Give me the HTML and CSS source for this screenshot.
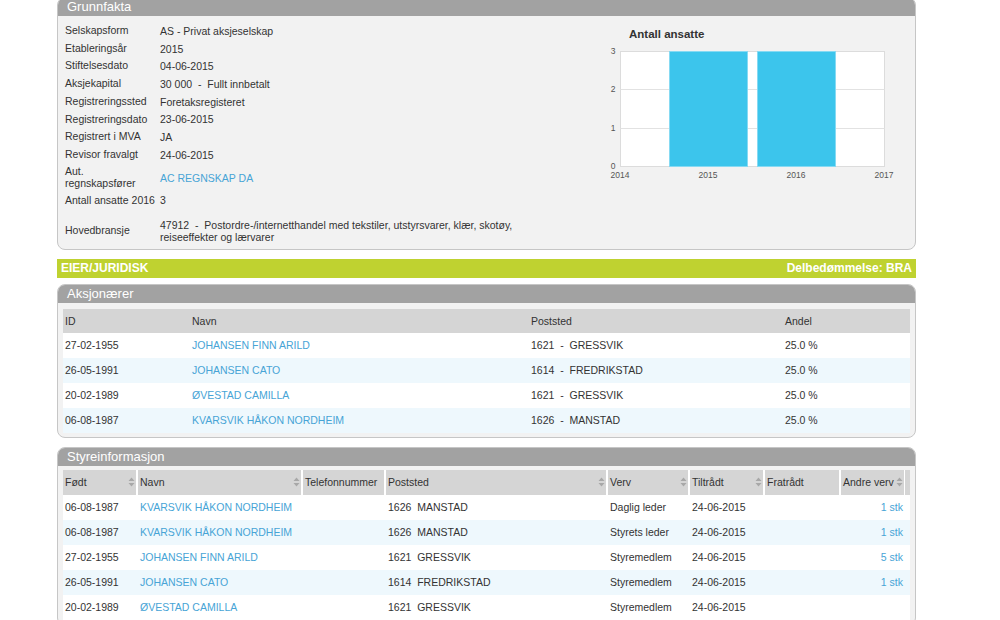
FILE: index.html
```html
<!DOCTYPE html>
<html lang="no">
<head>
<meta charset="utf-8">
<title>Grunnfakta</title>
<link rel="stylesheet" href="styles.css">
</head>
<body>
<div class="page">
  <section class="panel panel-first">
    <div class="panel-head">Grunnfakta</div>
    <div class="facts-body">
      <div class="facts">
        <div class="fact"><div class="fact-label">Selskapsform</div><div class="fact-value">AS - Privat aksjeselskap</div></div>
        <div class="fact"><div class="fact-label">Etableringsår</div><div class="fact-value">2015</div></div>
        <div class="fact"><div class="fact-label">Stiftelsesdato</div><div class="fact-value">04-06-2015</div></div>
        <div class="fact"><div class="fact-label">Aksjekapital</div><div class="fact-value">30 000&nbsp; -&nbsp; Fullt innbetalt</div></div>
        <div class="fact"><div class="fact-label">Registreringssted</div><div class="fact-value">Foretaksregisteret</div></div>
        <div class="fact"><div class="fact-label">Registreringsdato</div><div class="fact-value">23-06-2015</div></div>
        <div class="fact"><div class="fact-label">Registrert i MVA</div><div class="fact-value">JA</div></div>
        <div class="fact"><div class="fact-label">Revisor fravalgt</div><div class="fact-value">24-06-2015</div></div>
        <div class="fact fact-tall"><div class="fact-label">Aut.<br>regnskapsfører</div><div class="fact-value"><a class="link" href="#">AC REGNSKAP DA</a></div></div>
        <div class="fact"><div class="fact-label">Antall ansatte 2016</div><div class="fact-value">3</div></div>
        <div class="fact fact-branch"><div class="fact-label">Hovedbransje</div><div class="fact-value">47912&nbsp; -&nbsp; Postordre-/internetthandel med tekstiler, utstyrsvarer, klær, skotøy,<br>reiseeffekter og lærvarer</div></div>
      </div>
      <div class="chart">
        <svg width="290" height="156" viewBox="0 0 290 156">
          <text class="chart-title" x="24" y="12">Antall ansatte</text>
          <rect x="15.5" y="25.5" width="264" height="115" fill="#fff" stroke="#dcdcdc"/>
          <line x1="15.5" y1="63.5" x2="279.5" y2="63.5" stroke="#e2e2e2"/>
          <line x1="15.5" y1="102.5" x2="279.5" y2="102.5" stroke="#e2e2e2"/>
          <rect x="64.5" y="25.5" width="78" height="115" fill="#3cc5ec" stroke="#86daf3"/>
          <rect x="152.5" y="25.5" width="78" height="115" fill="#3cc5ec" stroke="#86daf3"/>
          <text class="axis" x="8" y="28" text-anchor="middle">3</text>
          <text class="axis" x="8" y="66" text-anchor="middle">2</text>
          <text class="axis" x="8" y="105" text-anchor="middle">1</text>
          <text class="axis" x="8" y="143" text-anchor="middle">0</text>
          <text class="axis" x="15" y="152" text-anchor="middle">2014</text>
          <text class="axis" x="103" y="152" text-anchor="middle">2015</text>
          <text class="axis" x="191" y="152" text-anchor="middle">2016</text>
          <text class="axis" x="279" y="152" text-anchor="middle">2017</text>
        </svg>
      </div>
    </div>
  </section>

  <div class="section-bar"><span>EIER/JURIDISK</span><span>Delbedømmelse: BRA</span></div>

  <section class="panel panel-owners">
    <div class="panel-head">Aksjonærer</div>
    <table class="grid owners">
      <thead>
        <tr><th class="c-id">ID</th><th class="c-name">Navn</th><th class="c-post">Poststed</th><th class="c-share">Andel</th></tr>
      </thead>
      <tbody>
        <tr><td>27-02-1955</td><td><a class="link" href="#">JOHANSEN FINN ARILD</a></td><td>1621&nbsp; -&nbsp; GRESSVIK</td><td>25.0 %</td></tr>
        <tr><td>26-05-1991</td><td><a class="link" href="#">JOHANSEN CATO</a></td><td>1614&nbsp; -&nbsp; FREDRIKSTAD</td><td>25.0 %</td></tr>
        <tr><td>20-02-1989</td><td><a class="link" href="#">ØVESTAD CAMILLA</a></td><td>1621&nbsp; -&nbsp; GRESSVIK</td><td>25.0 %</td></tr>
        <tr><td>06-08-1987</td><td><a class="link" href="#">KVARSVIK HÅKON NORDHEIM</a></td><td>1626&nbsp; -&nbsp; MANSTAD</td><td>25.0 %</td></tr>
      </tbody>
    </table>
  </section>

  <section class="panel panel-board">
    <div class="panel-head">Styreinformasjon</div>
    <table class="grid board">
      <thead>
        <tr>
          <th class="b-born"><div class="th-in"><span>Født</span><svg class="sort" width="7" height="10" viewBox="0 0 7 10"><path d="M0.5 4 L3.5 0.5 L6.5 4 Z M0.5 6 L3.5 9.5 L6.5 6 Z"/></svg></div></th>
          <th class="b-name"><div class="th-in"><span>Navn</span><svg class="sort" width="7" height="10" viewBox="0 0 7 10"><path d="M0.5 4 L3.5 0.5 L6.5 4 Z M0.5 6 L3.5 9.5 L6.5 6 Z"/></svg></div></th>
          <th class="b-phone"><div class="th-in"><span>Telefonnummer</span></div></th>
          <th class="b-post"><div class="th-in"><span>Poststed</span><svg class="sort" width="7" height="10" viewBox="0 0 7 10"><path d="M0.5 4 L3.5 0.5 L6.5 4 Z M0.5 6 L3.5 9.5 L6.5 6 Z"/></svg></div></th>
          <th class="b-role"><div class="th-in"><span>Verv</span><svg class="sort" width="7" height="10" viewBox="0 0 7 10"><path d="M0.5 4 L3.5 0.5 L6.5 4 Z M0.5 6 L3.5 9.5 L6.5 6 Z"/></svg></div></th>
          <th class="b-from"><div class="th-in"><span>Tiltrådt</span><svg class="sort" width="7" height="10" viewBox="0 0 7 10"><path d="M0.5 4 L3.5 0.5 L6.5 4 Z M0.5 6 L3.5 9.5 L6.5 6 Z"/></svg></div></th>
          <th class="b-to"><div class="th-in"><span>Fratrådt</span></div></th>
          <th class="b-other"><div class="th-in"><span>Andre verv</span><svg class="sort" width="7" height="10" viewBox="0 0 7 10"><path d="M0.5 4 L3.5 0.5 L6.5 4 Z M0.5 6 L3.5 9.5 L6.5 6 Z"/></svg></div></th>
          <th class="b-scroll"></th>
        </tr>
      </thead>
      <tbody>
        <tr><td>06-08-1987</td><td><a class="link" href="#">KVARSVIK HÅKON NORDHEIM</a></td><td></td><td>1626&nbsp; MANSTAD</td><td>Daglig leder</td><td>24-06-2015</td><td></td><td class="num"><a class="link" href="#">1 stk</a></td><td></td></tr>
        <tr><td>06-08-1987</td><td><a class="link" href="#">KVARSVIK HÅKON NORDHEIM</a></td><td></td><td>1626&nbsp; MANSTAD</td><td>Styrets leder</td><td>24-06-2015</td><td></td><td class="num"><a class="link" href="#">1 stk</a></td><td></td></tr>
        <tr><td>27-02-1955</td><td><a class="link" href="#">JOHANSEN FINN ARILD</a></td><td></td><td>1621&nbsp; GRESSVIK</td><td>Styremedlem</td><td>24-06-2015</td><td></td><td class="num"><a class="link" href="#">5 stk</a></td><td></td></tr>
        <tr><td>26-05-1991</td><td><a class="link" href="#">JOHANSEN CATO</a></td><td></td><td>1614&nbsp; FREDRIKSTAD</td><td>Styremedlem</td><td>24-06-2015</td><td></td><td class="num"><a class="link" href="#">1 stk</a></td><td></td></tr>
        <tr><td>20-02-1989</td><td><a class="link" href="#">ØVESTAD CAMILLA</a></td><td></td><td>1621&nbsp; GRESSVIK</td><td>Styremedlem</td><td>24-06-2015</td><td></td><td class="num"></td><td></td></tr>
      </tbody>
    </table>
  </section>
</div>
</body>
</html>
```
FILE: styles.css
```css
html {
  overflow: hidden;
}

body {
  margin: 0;
  background: #fff;
  color: #333;
  font-family: "Liberation Sans", Arial, sans-serif;
  font-size: 10.5px;
}

.page {
  width: 859px;
  margin-left: 57px;
}

.link {
  color: #47a4d6;
  text-decoration: none;
}

/* Panels */
.panel {
  border: 1px solid #c6c6c6;
  border-radius: 8px;
  background: #f2f2f2;
  overflow: hidden;
}

.panel-first {
  margin-top: -3px;
}

.panel-head {
  height: 18px;
  line-height: 18px;
  padding-left: 9px;
  background: #a2a2a2;
  color: #fff;
  font-size: 13px;
}

/* Facts */
.facts-body {
  display: flex;
  padding: 6px 20px 5px 7px;
}

.facts {
  width: 470px;
}

.fact {
  display: flex;
  align-items: center;
  height: 17.7px;
}

.fact-tall {
  height: 28px;
}

.fact-branch {
  height: 26px;
  margin-top: 8.5px;
}

.fact-label {
  width: 95px;
  flex: none;
  line-height: 11.5px;
}

.fact-value {
  line-height: 12px;
}

.chart {
  margin-left: auto;
  margin-top: 4px;
  width: 290px;
  height: 156px;
}

.chart svg {
  display: block;
}

.chart-title {
  font-family: "Liberation Sans", Arial, sans-serif;
  font-size: 11.5px;
  font-weight: bold;
  fill: #333;
}

.axis {
  font-family: "Liberation Sans", Arial, sans-serif;
  font-size: 8.5px;
  fill: #555;
}

/* Section bar */
.section-bar {
  display: flex;
  justify-content: space-between;
  margin-top: 9px;
  height: 19px;
  line-height: 19px;
  padding: 0 4px;
  background: #bfd230;
  color: #fff;
  font-size: 12px;
  font-weight: bold;
}

.panel-owners {
  margin-top: 6px;
}

.panel-board {
  margin-top: 9px;
}

/* Tables */
.grid {
  width: calc(100% - 10px);
  margin: 5px;
  border-collapse: separate;
  border-spacing: 0;
  table-layout: fixed;
}

.owners {
  margin-top: 6px;
  margin-bottom: 4px;
}

.board {
  margin-top: 4px;
}

.grid th,
.grid td {
  box-sizing: border-box;
  text-align: left;
  font-weight: normal;
  white-space: nowrap;
  overflow: hidden;
  vertical-align: middle;
  padding: 0 2px;
}

.grid th {
  height: 24px;
  background: #d5d5d5;
}

.grid td {
  height: 25px;
}

.grid tbody tr:nth-child(odd) {
  background: #fff;
}

.grid tbody tr:nth-child(even) {
  background: #eef8fd;
}

.owners .c-id { width: 127px; }
.owners .c-name { width: 339px; }
.owners .c-post { width: 254px; }
.owners .c-share { width: 127px; }

.board th {
  height: 25px;
  border-left: 2px solid #fff;
  padding: 0 1px 0 2px;
}

.board th:first-child {
  border-left: none;
}

.board td {
  padding-left: 4px;
}

.board td:first-child {
  padding-left: 2px;
}

.board td.num {
  text-align: right;
  padding-right: 1px;
}

.board .b-born { width: 73px; }
.board .b-name { width: 165px; }
.board .b-phone { width: 83px; }
.board .b-post { width: 222px; }
.board .b-role { width: 82px; }
.board .b-from { width: 75px; }
.board .b-to { width: 76px; }
.board .b-other { width: 65px; }
.board .b-scroll { width: 6px; border-left-width: 1px; padding: 0; }

.th-in {
  display: flex;
  align-items: center;
  justify-content: space-between;
}

.sort {
  flex: none;
  fill: #a8a8a8;
}
```
